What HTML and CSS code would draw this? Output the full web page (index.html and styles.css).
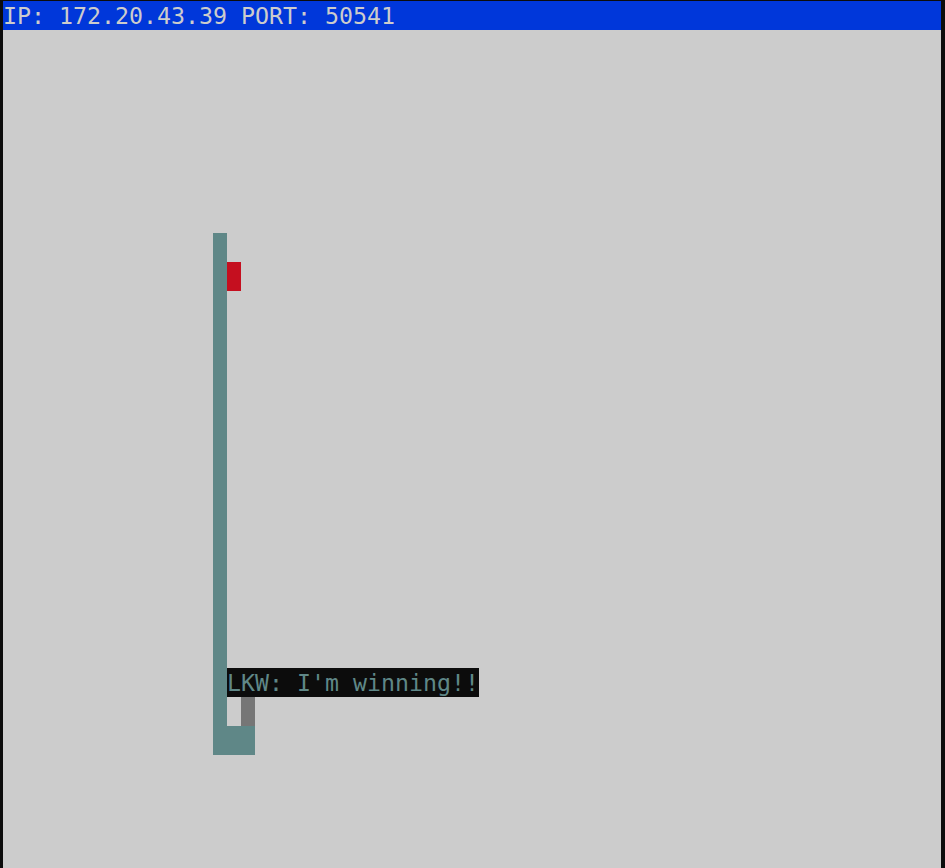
FILE: index.html
```html
<!DOCTYPE html>
<html>
<head>
<meta charset="utf-8">
<link rel="stylesheet" href="styles.css">
</head>
<body>
<div class="term">
  <div class="status">IP: 172.20.43.39 PORT: 50541</div>
  <div class="snake-body"></div>
  <div class="snake-foot"></div>
  <div class="food"></div>
  <div class="msg">LKW: I'm winning!!</div>
  <div class="cursor"></div>
</div>
</body>
</html>
```
FILE: styles.css
```css
html, body {
  margin: 0;
  padding: 0;
  background: #0c0c0c;
  overflow: hidden;
  height: 868px;
}
.term {
  margin-top: 1px;
  margin-left: 3px;
  width: 938px;
  height: 867px;
  overflow: hidden;
  background: #cccccc;
  display: grid;
  grid-template-columns: repeat(67, 14px);
  grid-template-rows: repeat(30, 29px);
  font-family: "DejaVu Sans Mono", "Liberation Mono", monospace;
  font-size: 23.25px;
  line-height: 29px;
}
.status {
  grid-row: 1;
  grid-column: 1 / -1;
  background: #0037da;
  color: #cccccc;
  white-space: pre;
}
.snake-body {
  grid-row: 9 / 27;
  grid-column: 16;
  background: #5f8787;
}
.snake-foot {
  grid-row: 26;
  grid-column: 16 / span 3;
  background: #5f8787;
}
.food {
  grid-row: 10;
  grid-column: 17;
  background: #c50f1f;
}
.msg {
  grid-row: 24;
  grid-column: 17 / span 18;
  background: #0c0c0c;
  color: #5f8787;
  white-space: pre;
}
.cursor {
  grid-row: 25;
  grid-column: 18;
  background: #767676;
}
```
